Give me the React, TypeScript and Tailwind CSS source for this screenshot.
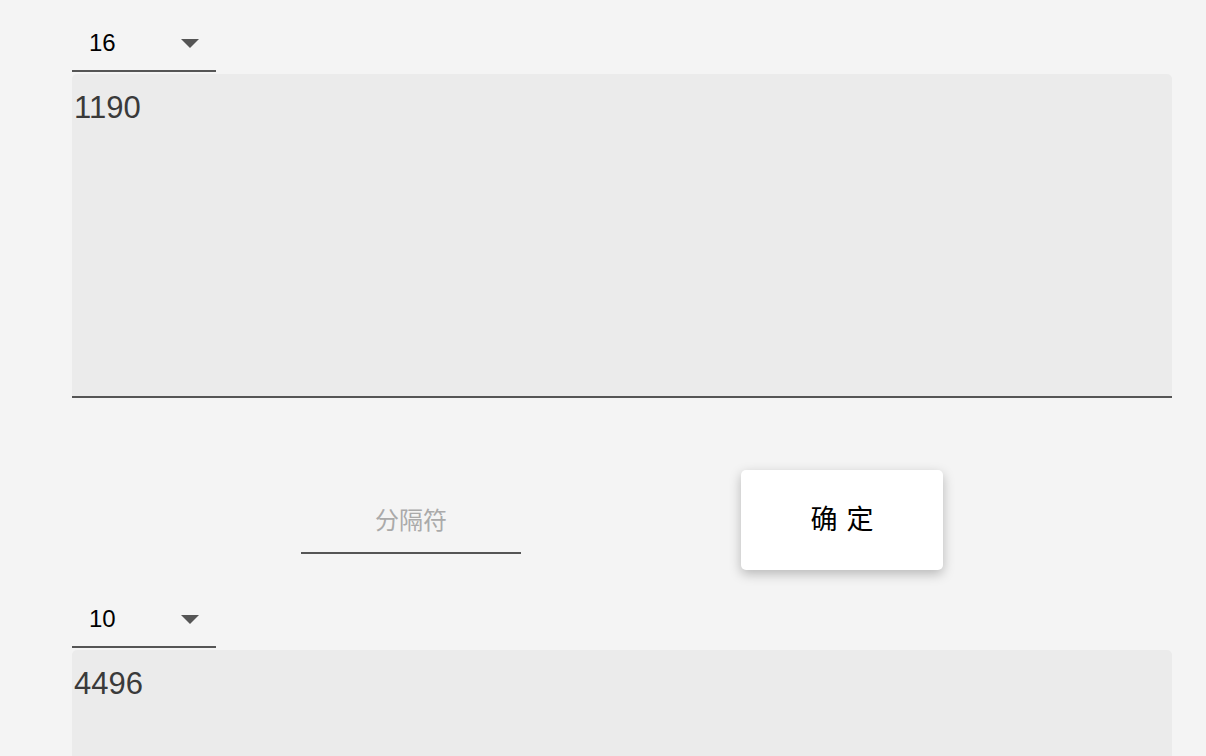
import { useState } from "react";


function Picker({ value }: { value: string }) {

    return (

        <div className="w-[144px] h-[48px] border-b-2 border-[#555] flex items-end pb-[15px] pl-[17px] pr-[17px] justify-between">

            <span className="text-[24px] leading-none text-black">
                {value}
            </span>

            <svg width="18" height="9" viewBox="0 0 18 9" className="mb-[7px]">
                <path d="M0 0 L18 0 L9 9 Z" fill="#555" />
            </svg>

        </div>

    );

}


function Box({ value, height }: { value: string; height: string }) {

    return (

        <textarea
            readOnly
            defaultValue={value}
            className={`w-full ${height} mt-[2px] bg-[#ebebeb] rounded-t-[5px] border-b-2 border-[#555] resize-none outline-none pt-[15px] pl-[2px] text-[31px] leading-[1.2] text-[#3a3a3a] block`}
        />

    );

}


export default function App() {

    const [sep, setSep] =
        useState("");

    return (

        <div className="min-h-screen bg-[#f4f4f4] overflow-hidden" style={{ fontFamily: "'Liberation Sans', 'Noto Sans CJK SC', sans-serif" }}>

            <div className="w-[1100px] ml-[72px] pt-[24px]">

                <Picker value="16" />

                <Box value="1190" height="h-[324px]" />


                <div className="flex items-start mt-[72px]">

                    <input
                        className="w-[220px] h-[84px] ml-[229px] bg-transparent border-b-2 border-[#555] outline-none text-center text-[24px] pt-[20px] text-[#aaa] placeholder:text-[#aaa]"
                        placeholder="分隔符"
                        value={sep}
                        onChange={e => setSep(e.target.value)}
                    />

                    <button className="ml-[220px] w-[202px] h-[100px] bg-white rounded-[5px] shadow-[0_4px_12px_rgba(0,0,0,0.25)] text-[27px] tracking-[9px] pl-[9px] text-black">
                        确定
                    </button>

                </div>


                <div className="mt-[30px]">
                    <Picker value="10" />
                </div>

                <Box value="4496" height="h-[200px]" />

            </div>

        </div>

    );

}
